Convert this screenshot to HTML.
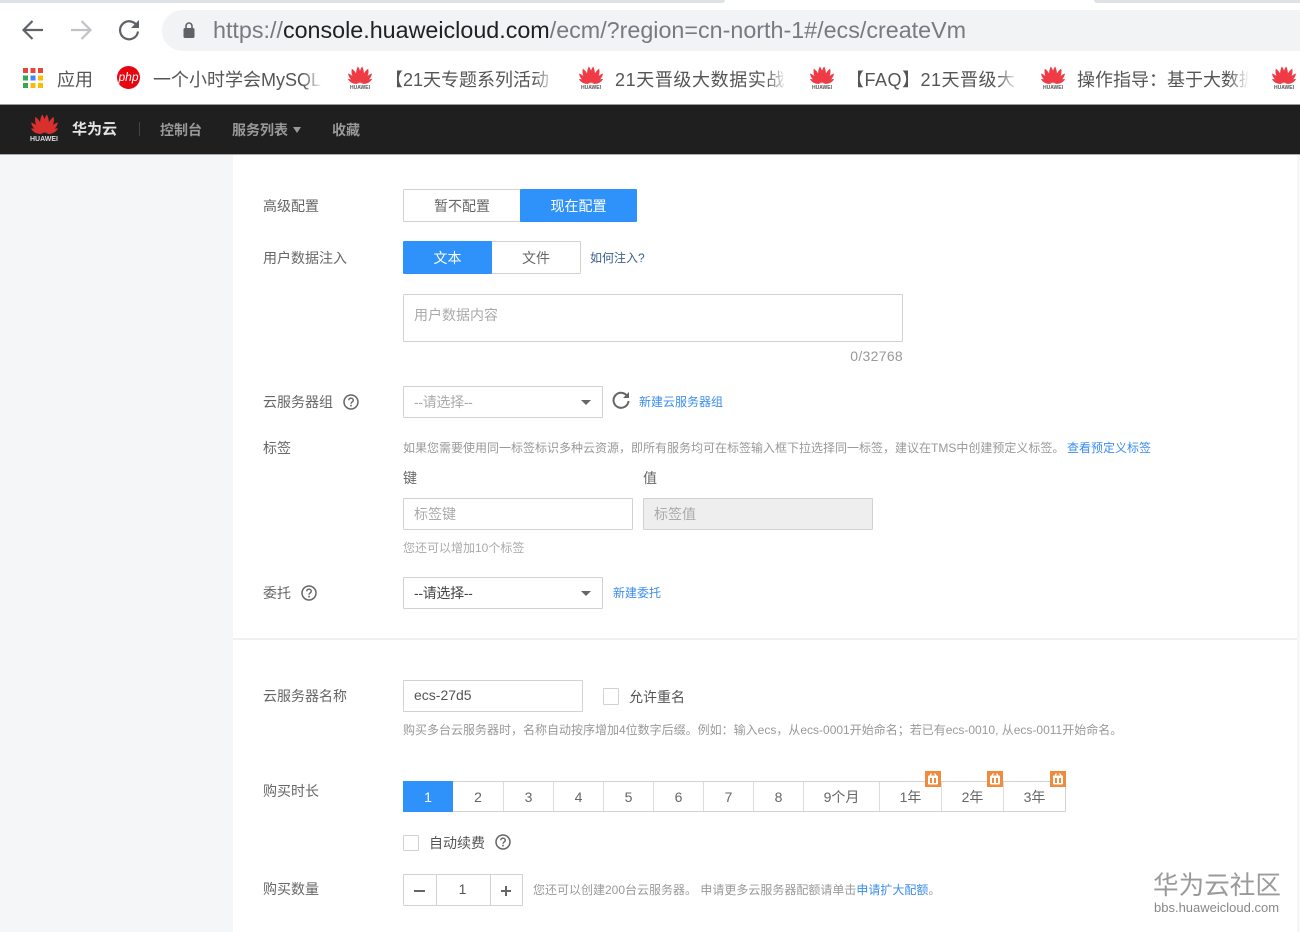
<!DOCTYPE html>
<html lang="zh-CN"><head><meta charset="utf-8"><title>华为云</title>
<style>
html,body{margin:0;padding:0;background:#fff}
#p{position:relative;width:1300px;height:932px;overflow:hidden;background:#fff;font-family:"Liberation Sans","Noto Sans CJK SC",sans-serif;color:#666;font-size:14px;filter:blur(.3px)}
#p div,#p svg,#p span.a{position:absolute}
.t{white-space:nowrap;line-height:20px;height:20px;margin-top:1px}
.s{font-size:12px;color:#999}
.l{font-size:12px;color:#3b8ded}
.b{box-sizing:border-box;border:1px solid #d2d2d2;background:#fff;border-radius:1px}
.c{text-align:center;color:#666}
.o{background:#2f92fb;color:#fff;border-color:#2f92fb}
.bm{font-size:18px;color:#555;white-space:nowrap;overflow:hidden;height:28px;line-height:28px;top:66px;-webkit-mask-image:linear-gradient(to right,#000 88%,transparent);mask-image:linear-gradient(to right,#000 88%,transparent)}
.hw{font-size:5px;line-height:6px;color:#555;font-weight:bold;text-align:center;width:30px;top:85px}
.n{top:782px;height:29px;line-height:30px;text-align:center;color:#666;font-size:14px;border-right:1px solid #ddd;box-sizing:border-box}
</style></head><body><div id="p">
<svg width="0" height="0" style="position:absolute"><defs>
<symbol id="hw" viewBox="0 0 24 18">
<path d="M11.500 17.500C7.500 13 7 6 9.800.5 13 4 13.500 11 11.500 17.500z"/>
<path d="M10.800 17.600C5.500 14 2.500 8.500 3.800 2.600 8 5.500 10.500 11 10.800 17.600z"/>
<path d="M10 17.800C5.500 16 .8 13 0 7.500 4.500 9 8.500 13 10 17.800z"/>
<path d="M9.500 18C5.500 18 1.500 16.500 0 13 3.500 12.600 7 15 9.500 18z"/>
<g transform="matrix(-1 0 0 1 24 0)">
<path d="M11.500 17.500C7.500 13 7 6 9.800.5 13 4 13.500 11 11.500 17.500z"/>
<path d="M10.800 17.600C5.500 14 2.500 8.500 3.800 2.600 8 5.500 10.500 11 10.800 17.600z"/>
<path d="M10 17.800C5.500 16 .8 13 0 7.500 4.500 9 8.500 13 10 17.800z"/>
<path d="M9.500 18C5.500 18 1.500 16.500 0 13 3.500 12.600 7 15 9.500 18z"/>
</g>
</symbol>
<symbol id="help" viewBox="0 0 16 16">
<circle cx="8" cy="8" r="7" fill="none" stroke="#666" stroke-width="1.5"/>
<path d="M5.700 6.300C5.800 4.900 6.800 4.200 8 4.200c1.300 0 2.300.8 2.300 2 0 1.700-2.300 1.700-2.300 3.500" fill="none" stroke="#666" stroke-width="1.400"/>
<rect x="7.200" y="10.800" width="1.600" height="1.600" fill="#666"/>
</symbol>
<symbol id="gift" viewBox="0 0 16 16">
<rect width="16" height="16" fill="#f08a3c"/>
<rect x="3" y="4.500" width="10" height="9" rx="1" fill="#fff"/>
<path d="M5 4.500 6.500 2.500M11 4.500 9.500 2.500" stroke="#fff" stroke-width="1.200"/>
<rect x="5" y="7" width="2" height="5" fill="#f08a3c"/><rect x="9" y="7" width="2" height="5" fill="#f08a3c"/>
</symbol>
</defs></svg>

<!-- browser chrome -->
<div style="left:0;top:0;width:725px;height:3px;background:#dee1e6;border-radius:0 0 6px 0"></div>
<div style="left:1094px;top:0;width:206px;height:3px;background:#dee1e6;border-radius:0 0 0 6px"></div>
<svg style="left:20px;top:17px" width="26" height="26" viewBox="0 0 26 26"><path d="M23 13H4M12.500 4L3.500 13l9 9" fill="none" stroke="#5f6368" stroke-width="2.200"/></svg>
<svg style="left:68px;top:17px" width="26" height="26" viewBox="0 0 26 26"><path d="M3 13h19M13.500 4l9 9-9 9" fill="none" stroke="#c0c2c5" stroke-width="2.200"/></svg>
<svg style="left:116px;top:17px" width="26" height="26" viewBox="0 0 26 26"><path d="M21 9A9 9 0 1 0 22 14.500" fill="none" stroke="#5f6368" stroke-width="2.200"/><path d="M23 3v8h-8z" fill="#5f6368"/></svg>
<div style="left:162px;top:10px;width:1138px;height:41px;background:#f1f3f4;border-radius:21px 0 0 21px"></div>
<svg style="left:181px;top:21px" width="16" height="18" viewBox="0 0 16 18"><rect x="2.500" y="7" width="11" height="10" rx="1.500" fill="#5f6368"/><path d="M5 7V5a3 3 0 0 1 6 0v2" fill="none" stroke="#5f6368" stroke-width="1.600"/></svg>
<div class="t" style="left:213px;top:15px;margin-top:0;height:30px;line-height:30px;font-size:23.300px;color:#777b80">https://<span style="color:#202124">console.huaweicloud.com</span>/ecm/?region=cn-north-1#/ecs/createVm</div>

<!-- bookmarks -->
<svg style="left:23px;top:68px" width="20" height="20" viewBox="0 0 20 20">
<g fill="#e8453c"><rect width="5" height="5"/><rect x="7.500" width="5" height="5"/><rect x="15" width="5" height="5"/></g>
<rect y="7.500" width="5" height="5" fill="#34a853"/><rect x="7.500" y="7.500" width="5" height="5" fill="#4285f4"/><rect x="15" y="7.500" width="5" height="5" fill="#fbbc05"/>
<rect y="15" width="5" height="5" fill="#34a853"/><rect x="7.500" y="15" width="5" height="5" fill="#fbbc05"/><rect x="15" y="15" width="5" height="5" fill="#fbbc05"/></svg>
<div class="t" style="left:57px;top:65px;height:28px;line-height:28px;font-size:18px;color:#555">应用</div>
<div style="left:117px;top:66px;width:23px;height:23px;border-radius:50%;background:#e8050f;color:#fff;font:italic 12px/22px 'Liberation Sans',sans-serif;text-align:center">php</div>
<div class="bm" style="left:153px;width:170px">一个小时学会MySQL</div>
<svg style="left:348px;top:66px;fill:#ee3b45" width="24" height="18"><use href="#hw"/></svg><div class="hw" style="left:345px">HUAWEI</div>
<div class="bm" style="left:385px;width:170px">【21天专题系列活动</div>
<svg style="left:579px;top:66px;fill:#ee3b45" width="24" height="18"><use href="#hw"/></svg><div class="hw" style="left:576px">HUAWEI</div>
<div class="bm" style="left:615px;width:172px;letter-spacing:.6px">21天晋级大数据实战</div>
<svg style="left:810px;top:66px;fill:#ee3b45" width="24" height="18"><use href="#hw"/></svg><div class="hw" style="left:807px">HUAWEI</div>
<div class="bm" style="left:846px;width:172px;letter-spacing:.5px">【FAQ】21天晋级大</div>
<svg style="left:1041px;top:66px;fill:#ee3b45" width="24" height="18"><use href="#hw"/></svg><div class="hw" style="left:1038px">HUAWEI</div>
<div class="bm" style="left:1077px;width:172px">操作指导：基于大数据</div>
<svg style="left:1272px;top:66px;fill:#ee3b45" width="24" height="18"><use href="#hw"/></svg><div class="hw" style="left:1269px">HUAWEI</div>

<!-- console header -->
<div style="left:0;top:104px;width:1300px;height:51px;background:#1f1f1f;border-top:1px solid #9a9a9a;border-bottom:1px solid #aaa;box-sizing:border-box"></div>
<svg style="left:31px;top:114px;fill:#d8302c" width="27" height="20"><use href="#hw"/></svg>
<div class="t" style="left:24px;top:135px;margin-top:0;width:40px;text-align:center;height:9px;line-height:9px;font-size:7px;font-weight:bold;color:#ddd">HUAWEI</div>
<div class="t" style="left:72px;top:119px;font-size:15px;font-weight:bold;color:#e4e4e4">华为云</div>
<div style="left:139px;top:122px;width:1px;height:14px;background:#444"></div>
<div class="t" style="left:160px;top:119px;font-weight:bold;color:#999">控制台</div>
<div class="t" style="left:232px;top:119px;font-weight:bold;color:#999">服务列表</div>
<div style="left:293px;top:127px;width:0;height:0;border:4.500px solid transparent;border-top:6px solid #999;border-bottom:0"></div>
<div class="t" style="left:332px;top:119px;font-weight:bold;color:#999">收藏</div>

<!-- side areas -->
<div style="left:0;top:155px;width:233px;height:777px;background:#f5f6f8"></div>
<div style="left:1297px;top:155px;width:3px;height:777px;background:#f5f6f8"></div>

<!-- advanced -->
<div class="t" style="left:263px;top:195px">高级配置</div>
<div class="b c" style="left:403px;top:189px;width:118px;height:33px;line-height:33px">暂不配置</div>
<div class="b c o" style="left:520px;top:189px;width:117px;height:33px;line-height:33px">现在配置</div>

<div class="t" style="left:263px;top:247px">用户数据注入</div>
<div class="b c" style="left:491px;top:241px;width:90px;height:33px;line-height:33px">文件</div>
<div class="b c o" style="left:403px;top:241px;width:89px;height:33px;line-height:33px">文本</div>
<div class="t" style="left:590px;top:247px;font-size:12px;color:#3a6189">如何注入?</div>

<div class="b" style="left:403px;top:294px;width:500px;height:48px"></div>
<div class="t" style="left:414px;top:304px;color:#aaa">用户数据内容</div>
<div class="t" style="left:803px;width:100px;text-align:right;top:345px;color:#999;letter-spacing:.3px">0/32768</div>

<div class="t" style="left:263px;top:391px">云服务器组</div>
<svg style="left:343px;top:394px" width="16" height="16"><use href="#help"/></svg>
<div class="b" style="left:403px;top:386px;width:200px;height:32px"></div>
<div class="t" style="left:414px;top:391px;color:#aaa;letter-spacing:-.3px">--请选择--</div>
<div style="left:581px;top:400px;width:0;height:0;border:5px solid transparent;border-top:5px solid #666;border-bottom:0"></div>
<svg style="left:612px;top:391px" width="18" height="18" viewBox="0 0 18 18"><path d="M15.500 5.500A7.500 7.500 0 1 0 16.500 10" fill="none" stroke="#666" stroke-width="2"/><path d="M17 1v6h-6z" fill="#666"/></svg>
<div class="t l" style="left:639px;top:391px">新建云服务器组</div>

<div class="t" style="left:263px;top:437px">标签</div>
<div class="t s" style="left:403px;top:437px">如果您需要使用同一标签标识多种云资源，即所有服务均可在标签输入框下拉选择同一标签，建议在TMS中创建预定义标签。</div>
<div class="t l" style="left:1067px;top:437px">查看预定义标签</div>
<div class="t" style="left:403px;top:467px">键</div>
<div class="t" style="left:643px;top:467px">值</div>
<div class="b" style="left:403px;top:498px;width:230px;height:32px"></div>
<div class="t" style="left:414px;top:503px;color:#aaa">标签键</div>
<div class="b" style="left:643px;top:498px;width:230px;height:32px;background:#eee"></div>
<div class="t" style="left:654px;top:503px;color:#aaa">标签值</div>
<div class="t s" style="left:403px;top:537px;color:#aaa">您还可以增加10个标签</div>

<div class="t" style="left:263px;top:582px">委托</div>
<svg style="left:301px;top:585px" width="16" height="16"><use href="#help"/></svg>
<div class="b" style="left:403px;top:577px;width:200px;height:32px"></div>
<div class="t" style="left:414px;top:582px;color:#444;letter-spacing:-.3px">--请选择--</div>
<div style="left:581px;top:591px;width:0;height:0;border:5px solid transparent;border-top:5px solid #666;border-bottom:0"></div>
<div class="t l" style="left:613px;top:582px">新建委托</div>

<div style="left:233px;top:638px;width:1064px;height:2px;background:#f0f0f0"></div>

<!-- name -->
<div class="t" style="left:263px;top:685px">云服务器名称</div>
<div class="b" style="left:403px;top:680px;width:180px;height:32px"></div>
<div class="t" style="left:414px;top:684px;color:#555">ecs-27d5</div>
<div class="b" style="left:603px;top:688px;width:16px;height:17px"></div>
<div class="t" style="left:629px;top:686px;color:#555">允许重名</div>
<div class="t s" style="left:403px;top:719px">购买多台云服务器时，名称自动按序增加4位数字后缀。例如：输入ecs，从ecs-0001开始命名；若已有ecs-0010, 从ecs-0011开始命名。</div>

<!-- duration -->
<div class="t" style="left:263px;top:780px">购买时长</div>
<div class="b" style="left:403px;top:781px;width:663px;height:31px"></div>
<div class="n" style="left:453px;width:51px">2</div>
<div class="n" style="left:504px;width:50px">3</div>
<div class="n" style="left:554px;width:50px">4</div>
<div class="n" style="left:604px;width:50px">5</div>
<div class="n" style="left:654px;width:50px">6</div>
<div class="n" style="left:704px;width:50px">7</div>
<div class="n" style="left:754px;width:50px">8</div>
<div class="n" style="left:804px;width:76px">9个月</div>
<div class="n" style="left:880px;width:62px">1年</div>
<div class="n" style="left:942px;width:62px">2年</div>
<div class="n" style="left:1004px;width:61px;border-right:0">3年</div>
<div class="c o" style="left:403px;top:781px;width:50px;height:31px;line-height:33px">1</div>
<svg style="left:925px;top:771px" width="16" height="16"><use href="#gift"/></svg>
<svg style="left:987px;top:771px" width="16" height="16"><use href="#gift"/></svg>
<svg style="left:1050px;top:771px" width="16" height="16"><use href="#gift"/></svg>

<div class="b" style="left:403px;top:835px;width:16px;height:16px"></div>
<div class="t" style="left:429px;top:832px;color:#555">自动续费</div>
<svg style="left:495px;top:834px" width="16" height="16"><use href="#help"/></svg>

<!-- quantity -->
<div class="t" style="left:263px;top:878px">购买数量</div>
<div class="b" style="left:403px;top:874px;width:120px;height:32px"></div>
<div style="left:436px;top:875px;width:1px;height:30px;background:#d2d2d2"></div>
<div style="left:490px;top:875px;width:1px;height:30px;background:#d2d2d2"></div>
<div style="left:414px;top:890px;width:11px;height:2px;background:#666"></div>
<div class="t" style="left:436px;width:53px;text-align:center;top:878px;color:#555">1</div>
<div style="left:501px;top:890px;width:10px;height:2px;background:#666"></div>
<div style="left:505px;top:886px;width:2px;height:10px;background:#666"></div>
<div class="t s" style="left:533px;top:879px">您还可以创建200台云服务器。 申请更多云服务器配额请单击<span style="color:#3b8ded">申请扩大配额</span>。</div>

<!-- watermark -->
<div class="t" style="left:1153px;top:868px;height:34px;line-height:34px;font-size:25.600px;color:#9a9a9a">华为云社区</div>
<div class="t" style="left:1154px;top:897px;font-size:13px;color:#888">bbs.huaweicloud.com</div>
</div></body></html>
